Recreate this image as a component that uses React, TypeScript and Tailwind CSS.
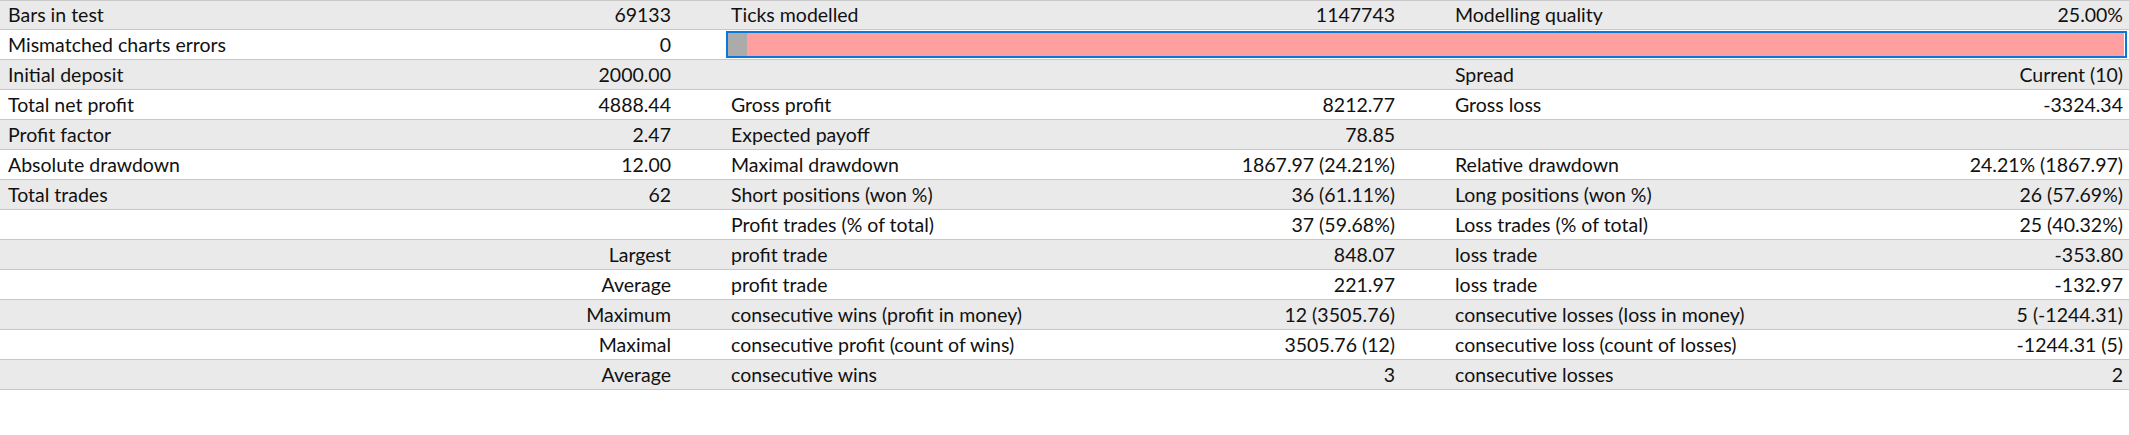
import React from "react";

type Cell = [string, string];
type Row = { bar?: boolean; cells: Cell[] };

const rows: Row[] = [
  { cells: [["Bars in test", "69133"], ["Ticks modelled", "1147743"], ["Modelling quality", "25.00%"]] },
  { bar: true, cells: [["Mismatched charts errors", "0"]] },
  { cells: [["Initial deposit", "2000.00"], ["", ""], ["Spread", "Current (10)"]] },
  { cells: [["Total net profit", "4888.44"], ["Gross profit", "8212.77"], ["Gross loss", "-3324.34"]] },
  { cells: [["Profit factor", "2.47"], ["Expected payoff", "78.85"], ["", ""]] },
  { cells: [["Absolute drawdown", "12.00"], ["Maximal drawdown", "1867.97 (24.21%)"], ["Relative drawdown", "24.21% (1867.97)"]] },
  { cells: [["Total trades", "62"], ["Short positions (won %)", "36 (61.11%)"], ["Long positions (won %)", "26 (57.69%)"]] },
  { cells: [["", ""], ["Profit trades (% of total)", "37 (59.68%)"], ["Loss trades (% of total)", "25 (40.32%)"]] },
  { cells: [["", "Largest"], ["profit trade", "848.07"], ["loss trade", "-353.80"]] },
  { cells: [["", "Average"], ["profit trade", "221.97"], ["loss trade", "-132.97"]] },
  { cells: [["", "Maximum"], ["consecutive wins (profit in money)", "12 (3505.76)"], ["consecutive losses (loss in money)", "5 (-1244.31)"]] },
  { cells: [["", "Maximal"], ["consecutive profit (count of wins)", "3505.76 (12)"], ["consecutive loss (count of losses)", "-1244.31 (5)"]] },
  { cells: [["", "Average"], ["consecutive wins", "3"], ["consecutive losses", "2"]] },
];

function Group({ cell, last }: { cell: Cell; last?: boolean }) {
  return (
    <div className={`flex items-center justify-between pl-2 ${last ? "pr-[6px]" : "pr-[52px]"}`}>
      <span className="whitespace-nowrap">{cell[0]}</span>
      <span className="whitespace-nowrap">{cell[1]}</span>
    </div>
  );
}

export default function App() {
  return (
    <div
      className="w-[2129px] h-[435px] bg-white text-[19.5px] leading-none text-[#111]"
      style={{ fontFamily: "Lato, 'Open Sans', sans-serif" }}
    >
      {rows.map((r, i) => (
        <div
          key={i}
          className={`grid grid-cols-[723px_724px_1fr] h-[30px] border-b border-[#c8c8c8] ${
            i === 0 ? "border-t" : ""
          } ${i % 2 === 0 ? "bg-[#eaeaea]" : "bg-white"}`}
        >
          <Group cell={r.cells[0]} />
          {r.bar ? (
            <div className="col-span-2 flex py-[1px] pl-[3px] pr-[2px]">
              <div className="flex flex-1 border-2 border-[#0a78d7] bg-white">
                <div className="w-[19px] bg-[#ababab]" />
                <div className="flex-1 bg-[#ff9f9f] mr-[1px]" />
              </div>
            </div>
          ) : (
            <>
              <Group cell={r.cells[1]} />
              <Group cell={r.cells[2]} last />
            </>
          )}
        </div>
      ))}
    </div>
  );
}
